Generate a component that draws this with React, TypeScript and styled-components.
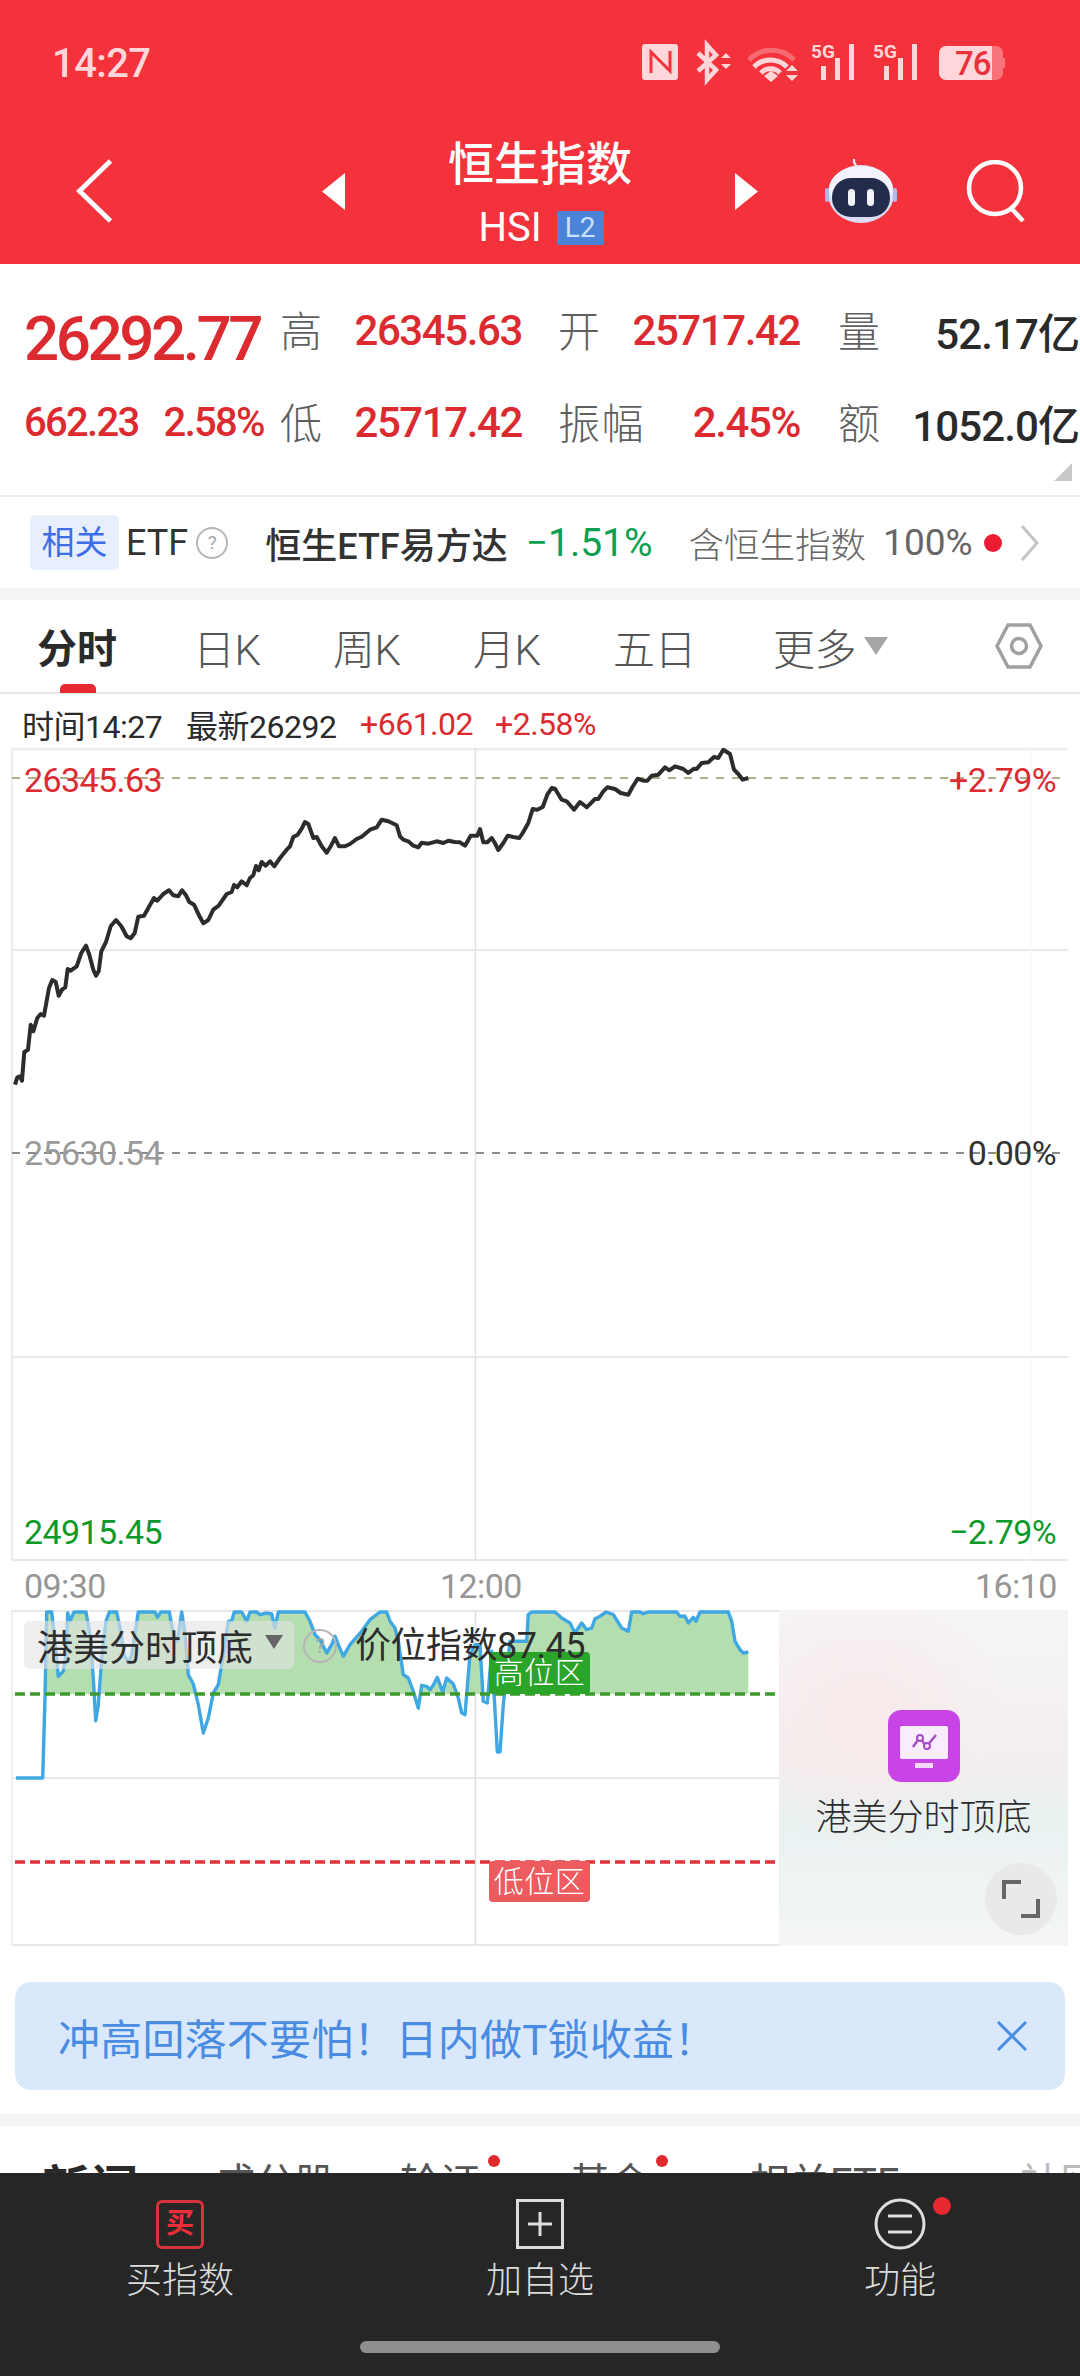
import React from "react";
import styled, { createGlobalStyle } from "styled-components";

const FONT = `Roboto, "Noto Sans CJK SC", sans-serif`;
const RED = "#dc2b30";
const GREEN = "#0b9a2a";

const GlobalStyle = createGlobalStyle`
  html, body { margin: 0; padding: 0; background: #fff; }
  body { font-family: ${FONT}; }
  * { box-sizing: border-box; }
`;

// traced from the reference, 3x zoom coordinates
const PRICE_LEFT = [
  [45, 1040], [52, 1018], [60, 1015], [66, 1028], [73, 942], [84, 935], [92, 860], [100, 880], [112, 840], [122, 828], [132, 833],
  [147, 750], [157, 726], [167, 732], [176, 773], [186, 755], [196, 748], [203, 693], [212, 698], [230, 685], [244, 645], [258, 623],
  [268, 650], [280, 695], [288, 713], [296, 700], [304, 640], [318, 612], [332, 565], [348, 546], [364, 565], [380, 595], [392, 601],
  [404, 585], [415, 536], [432, 533], [445, 510], [462, 480], [472, 488], [490, 468], [507, 457], [520, 472], [535, 475], [546, 457],
  [558, 472], [568, 492], [582, 500], [596, 530], [610, 556], [625, 546], [640, 515], [656, 503], [680, 468], [695, 462], [702, 441],
  [712, 448], [725, 430], [740, 442], [750, 420], [760, 412], [768, 384], [776, 397], [785, 372], [797, 383], [810, 370], [823, 385],
  [840, 360], [860, 335], [870, 325], [880, 297], [893, 290], [905, 272], [915, 252], [925, 258], [940, 300], [950, 297], [965, 325],
  [980, 344], [992, 325], [1005, 300], [1017, 325], [1035, 325], [1050, 318], [1070, 303], [1085, 296], [1110, 275], [1130, 268],
  [1145, 245], [1165, 250], [1190, 262], [1200, 295],
];
const PRICE_RIGHT = [
  [10, 305], [25, 310], [40, 323], [55, 328], [65, 314], [85, 317], [110, 310], [130, 315], [145, 308], [165, 312], [180, 313],
  [195, 323], [212, 293], [232, 293], [240, 273], [250, 313], [262, 313], [275, 300], [283, 312], [295, 336], [310, 315], [323, 293],
  [340, 297], [358, 300], [368, 285], [385, 255], [398, 213], [412, 215], [428, 207], [442, 170], [455, 150], [465, 152], [485, 185],
  [500, 190], [522, 215], [540, 192], [560, 208], [585, 183], [595, 183], [610, 160], [622, 148], [645, 153], [662, 165], [685, 170],
  [697, 148], [713, 122], [730, 128], [742, 128], [755, 113], [775, 110], [795, 88], [808, 97], [825, 85], [850, 93], [865, 105],
  [882, 92], [890, 93], [905, 75], [925, 73], [942, 57], [955, 60], [970, 35], [990, 48], [1002, 95], [1015, 108], [1028, 125], [1045, 120],
];
const INDEX_LEFT = [
  [48, 540], [128, 540], [135, 300], [140, 42], [155, 42], [165, 130], [175, 235], [190, 220], [198, 170], [203, 45], [210, 70], [222, 42],
  [258, 42], [270, 110], [280, 240], [287, 368], [295, 320], [305, 180], [318, 70], [328, 42], [350, 42], [362, 100], [372, 170], [385, 195],
  [395, 170], [415, 42], [465, 42], [472, 58], [483, 42], [508, 42], [520, 110], [532, 130], [545, 42], [555, 110], [565, 230], [580, 258],
  [595, 320], [610, 405], [625, 360], [640, 285], [655, 260], [668, 180], [685, 70], [695, 68], [703, 42], [725, 42], [740, 70], [750, 42],
  [770, 42], [780, 50], [800, 45], [815, 48], [825, 90], [835, 42], [915, 42], [930, 70], [945, 110], [960, 125], [980, 165], [995, 140],
  [1005, 115], [1015, 140], [1030, 175], [1050, 140], [1085, 100], [1110, 65], [1140, 42], [1160, 42], [1170, 70], [1185, 90], [1195, 130],
];
const INDEX_RIGHT = [
  [10, 230], [25, 240], [40, 280], [55, 330], [65, 262], [80, 265], [90, 275], [100, 262], [112, 238], [128, 282], [140, 240], [160, 258],
  [175, 300], [185, 345], [195, 350], [210, 170], [225, 140], [240, 140], [250, 310], [262, 315], [275, 160], [283, 300], [292, 462], [300, 462],
  [310, 320], [330, 130], [380, 130], [385, 50], [395, 42], [465, 42], [485, 60], [510, 75], [525, 105], [545, 75], [560, 95], [575, 90],
  [585, 62], [600, 55], [618, 42], [640, 50], [665, 90], [685, 100], [695, 42], [720, 42], [730, 47], [745, 42], [830, 42], [840, 55],
  [855, 55], [865, 75], [880, 58], [888, 70], [900, 42], [985, 42], [995, 70], [1005, 130], [1020, 155], [1030, 165], [1045, 162],
];

const scale = (pts: number[][], ox: number, oy: number) => pts.map(([x, y]) => [ox + x / 3, oy + y / 3]);
const toLine = (pts: number[][]) => pts.map(([x, y]) => `${x.toFixed(1)},${y.toFixed(1)}`).join(" ");

const pricePoints = toLine([...scale(PRICE_LEFT, 0, 740), ...scale(PRICE_RIGHT, 400, 740)]);
const indexPts = [...scale(INDEX_LEFT, 0, 1600), ...scale(INDEX_RIGHT, 400, 1600)];
const indexPoints = toLine(indexPts);
const indexFill = toLine([...indexPts, [748.3, 1785], [16, 1785]]);

const Page = styled.div`
  width: 1080px;
  height: 2376px;
  overflow: hidden;
  display: flex;
  flex-direction: column;
  background: #fff;
  color: #2a2a2a;
  font-family: ${FONT};
`;

const Header = styled.header`
  height: 264px;
  background: #f3323b;
  color: #fff;
  flex: none;
`;

const StatusBar = styled.div`
  height: 126px;
  padding: 0 62px 0 52px;
  display: flex;
  align-items: center;
  justify-content: space-between;
  color: #ffd6d9;
`;

const Clock = styled.span`
  font-size: 40px;
  font-weight: 500;
  letter-spacing: -0.6px;
`;

const Nav = styled.div`
  height: 138px;
  padding-bottom: 8px;
  display: grid;
  grid-template-columns: 322px 436px 322px;
  align-items: center;
`;

const NavSide = styled.div<{ $right?: boolean }>`
  display: flex;
  align-items: center;
  padding-left: ${(p) => (p.$right ? "67px" : "76px")};
  gap: 68px;
`;

const NavCenter = styled.div`
  display: flex;
  align-items: center;
  justify-content: space-between;
`;

const TitleBlock = styled.div`
  display: flex;
  flex-direction: column;
  align-items: center;
  margin-top: 2px;
`;

const Title = styled.div`
  font-size: 46px;
  font-weight: 500;
  line-height: 62px;
`;

const SubTitle = styled.div`
  display: flex;
  align-items: center;
  gap: 15px;
  font-size: 40px;
  line-height: 46px;
  margin-top: 10px;
  margin-left: 2px;
`;

const LevelBadge = styled.span`
  width: 47px;
  height: 34px;
  background: #4b83d9;
  color: #c9e0fb;
  font-size: 28px;
  line-height: 34px;
  text-align: center;
  border-radius: 2px;
`;

const Quotes = styled.section`
  position: relative;
  height: 233px;
  padding: 20px 0 29px 24px;
  border-bottom: 2px solid #ececec;
  flex: none;
`;

const QuoteRow = styled.div`
  height: 92px;
  display: flex;
  align-items: center;
`;

const QuoteLead = styled.div`
  width: 256px;
  display: flex;
  gap: 25px;
  font-size: 40px;
  font-weight: 500;
  letter-spacing: -1.7px;
  color: ${RED};
`;

const BigPrice = styled.div`
  font-size: 62px;
  font-weight: 500;
  letter-spacing: -3.5px;
  color: ${RED};
  margin-top: 18px;
  line-height: 70px;
`;

const Stat = styled.div<{ $w: number; $gap: number }>`
  width: ${(p) => p.$w}px;
  margin-right: ${(p) => p.$gap}px;
  display: flex;
  justify-content: space-between;
  align-items: center;
`;

const StatLabel = styled.span`
  font-size: 42px;
  font-weight: 300;
  color: #5f5f5f;
  letter-spacing: 1.5px;
  margin-top: -4px;
`;

const StatValue = styled.span<{ $dark?: boolean }>`
  font-size: 42px;
  font-weight: 500;
  letter-spacing: ${(p) => (p.$dark ? "-0.9px" : "-1.4px")};
  color: ${(p) => (p.$dark ? "#2a2a2a" : RED)};
`;

const CornerMark = styled.span`
  position: absolute;
  right: 8px;
  bottom: 14px;
  width: 0;
  height: 0;
  border-style: solid;
  border-width: 0 0 18px 18px;
  border-color: transparent transparent #c9c9c9 transparent;
`;

const EtfRow = styled.section`
  height: 91px;
  display: flex;
  align-items: center;
  padding-left: 30px;
  flex: none;
  font-size: 36px;
`;

const RelatedTag = styled.span`
  width: 89px;
  height: 55px;
  line-height: 55px;
  text-align: center;
  background: #e7effd;
  color: #3d6ee6;
  border-radius: 5px;
  font-size: 33px;
  margin-right: 7px;
`;

const EtfText = styled.span<{ $ml?: number; $color?: string; $weight?: number; $size?: number }>`
  margin-left: ${(p) => p.$ml ?? 0}px;
  color: ${(p) => p.$color ?? "#333"};
  font-weight: ${(p) => p.$weight ?? 400};
  font-size: ${(p) => p.$size ?? 36}px;
  white-space: nowrap;
`;

const HelpCircle = styled.span<{ $size: number; $ml: number }>`
  display: block;
  width: ${(p) => p.$size}px;
  height: ${(p) => p.$size}px;
  margin-left: ${(p) => p.$ml}px;
  border: 2px solid #b5b5b5;
  border-radius: 50%;
  color: #a5a5a5;
  font-size: ${(p) => p.$size * 0.6}px;
  line-height: ${(p) => p.$size - 4}px;
  text-align: center;
  flex: none;
`;

const RedDot = styled.span`
  width: 18px;
  height: 18px;
  margin-left: 11px;
  border-radius: 50%;
  background: #ee1c33;
  flex: none;
`;

const RowChevron = styled.svg`
  margin-left: 18px;
  flex: none;
`;

const GapBand = styled.div<{ $h: number }>`
  height: ${(p) => p.$h}px;
  background: #f4f4f4;
  flex: none;
`;

const Tabs = styled.nav`
  position: relative;
  height: 94px;
  padding-left: 37px;
  border-bottom: 2px solid #e6e6e6;
  display: flex;
  align-items: center;
  flex: none;
`;

const Tab = styled.div<{ $w: number; $active?: boolean }>`
  position: relative;
  width: ${(p) => p.$w}px;
  flex: none;
  display: flex;
  align-items: center;
  font-size: ${(p) => (p.$active ? 40 : 42)}px;
  letter-spacing: ${(p) => (p.$active ? "0" : "-0.5px")};
  font-weight: ${(p) => (p.$active ? 700 : 300)};
  color: ${(p) => (p.$active ? "#2a2a2a" : "#555")};
`;

const TabMark = styled.span`
  position: absolute;
  left: 23px;
  bottom: -18px;
  width: 36px;
  height: 9px;
  background: #e8292f;
  border-radius: 5px 5px 0 0;
`;

const MoreCaret = styled.span`
  width: 0;
  height: 0;
  margin-left: 8px;
  border-style: solid;
  border-width: 18px 12px 0 12px;
  border-color: #a6a6a6 transparent transparent transparent;
`;

const InfoLine = styled.div`
  height: 54px;
  padding: 6px 0 0 22px;
  display: flex;
  align-items: center;
  font-size: 32px;
  flex: none;
`;

const InfoText = styled.span<{ $w: number; $red?: boolean }>`
  width: ${(p) => p.$w}px;
  flex: none;
  white-space: nowrap;
  letter-spacing: -0.5px;
  color: ${(p) => (p.$red ? RED : "#2a2a2a")};
`;

const ChartBox = styled.div`
  position: relative;
  height: 814px;
  flex: none;
`;

const ChartSvg = styled.svg`
  display: block;
`;

const AxisLabel = styled.span<{ $top: number; $left?: number; $right?: number; $color: string }>`
  position: absolute;
  top: ${(p) => p.$top}px;
  ${(p) => (p.$left !== undefined ? `left: ${p.$left}px;` : "")}
  ${(p) => (p.$right !== undefined ? `right: ${p.$right}px;` : "")}
  color: ${(p) => p.$color};
  font-size: 34px;
  line-height: 40px;
  letter-spacing: -0.6px;
`;

const TimeAxis = styled.div`
  height: 48px;
  padding-left: 24px;
  display: grid;
  grid-template-columns: 416px 535px auto;
  align-items: center;
  color: #969696;
  font-size: 34px;
  letter-spacing: -0.6px;
  flex: none;
`;

const SubChart = styled.div`
  position: relative;
  height: 342px;
  display: flex;
  align-items: flex-start;
  flex: none;
`;

const IndicatorChip = styled.div`
  position: absolute;
  left: 24px;
  top: 11px;
  width: 270px;
  height: 48px;
  padding-left: 13px;
  display: flex;
  align-items: center;
  background: rgba(228, 228, 228, 0.62);
  border-radius: 6px;
  font-size: 36px;
  color: #2d2d2d;
`;

const ChipCaret = styled.span`
  width: 0;
  height: 0;
  margin-left: 12px;
  margin-top: -6px;
  border-style: solid;
  border-width: 14px 9px 0 9px;
  border-color: #666 transparent transparent transparent;
`;

const OverlayHelp = styled.div`
  position: absolute;
  left: 303px;
  top: 19px;
`;

const IndicatorValue = styled.div`
  position: absolute;
  left: 355px;
  top: 12px;
  font-size: 36px;
  line-height: 48px;
  color: #2d2d2d;
  letter-spacing: -0.5px;
  z-index: 2;
`;

const ZoneTag = styled.div<{ $top: number; $bg: string; $height: number }>`
  position: absolute;
  left: 489px;
  top: ${(p) => p.$top}px;
  width: 101px;
  height: ${(p) => p.$height}px;
  background: ${(p) => p.$bg};
  color: #fff;
  font-size: 30px;
  font-weight: 300;
  line-height: ${(p) => p.$height}px;
  text-align: center;
  letter-spacing: 0.5px;
  border-radius: 4px;
`;

const PromoPanel = styled.div`
  position: relative;
  width: 289px;
  height: 336px;
  flex: none;
  display: flex;
  flex-direction: column;
  align-items: center;
  padding-top: 100px;
  background:
    radial-gradient(circle at 30% 30%, rgba(250, 228, 230, 0.6), transparent 45%),
    linear-gradient(180deg, #f6f5f6 0%, #f3eeee 46%, #e9f1f1 62%, #f4f5f6 100%);
  font-size: 36px;
  font-weight: 300;
  color: #2d2d2d;
`;

const PromoTitle = styled.div`
  margin-top: 12px;
  line-height: 48px;
`;

const ExpandButton = styled.div`
  position: absolute;
  right: 11px;
  bottom: 11px;
  width: 72px;
  height: 72px;
  border-radius: 50%;
  background: #e9e9e9;
  display: flex;
  align-items: center;
  justify-content: center;
`;

const Banner = styled.div`
  height: 108px;
  margin: 30px 15px 24px;
  padding: 0 38px 0 43px;
  background: #d9e8fb;
  border-radius: 16px;
  display: flex;
  align-items: center;
  justify-content: space-between;
  color: #4a8ce2;
  font-size: 42px;
  letter-spacing: 0.2px;
  flex: none;
`;

const NewsTabs = styled.div`
  height: 47px;
  overflow: hidden;
  position: relative;
  padding: 26px 0 0 42px;
  display: flex;
  flex: none;
`;

const NewsTab = styled.div<{ $w: number; $active?: boolean; $faded?: boolean }>`
  position: relative;
  width: ${(p) => p.$w}px;
  flex: none;
  white-space: nowrap;
  font-size: ${(p) => (p.$active ? 48 : 40)}px;
  font-weight: ${(p) => (p.$active ? 700 : 400)};
  color: ${(p) => (p.$active ? "#2a2a2a" : p.$faded ? "#bbb" : "#555")};
  line-height: 56px;
  height: 56px;
  margin-top: ${(p) => (p.$active ? 9 : 4)}px;
`;

const NewsDot = styled.span<{ $left: number }>`
  position: absolute;
  left: ${(p) => p.$left}px;
  top: -1px;
  width: 12px;
  height: 12px;
  border-radius: 50%;
  background: #e22a2e;
`;

const BottomBar = styled.footer`
  flex: 1;
  background: #262626;
  display: flex;
  flex-direction: column;
  padding-top: 26px;
`;

const Actions = styled.div`
  display: grid;
  grid-template-columns: repeat(3, 360px);
`;

const Action = styled.div`
  position: relative;
  display: flex;
  flex-direction: column;
  align-items: center;
  color: #dcdcdc;
  font-size: 36px;
  font-weight: 300;
`;

const ActionIcon = styled.div`
  height: 50px;
  display: flex;
  align-items: center;
  justify-content: center;
`;

const ActionLabel = styled.div`
  margin-top: 9px;
  line-height: 46px;
`;

const BuyIcon = styled.div`
  width: 48px;
  height: 49px;
  border: 3px solid #d9333a;
  border-radius: 6px;
  color: #ee2f3a;
  font-size: 28px;
  font-weight: 700;
  line-height: 42px;
  text-align: center;
`;

const ActionDot = styled.span`
  position: absolute;
  left: 213px;
  top: -2px;
  width: 18px;
  height: 18px;
  border-radius: 50%;
  background: #e8292f;
`;

const HomeBar = styled.div`
  width: 360px;
  height: 12px;
  margin: 37px auto 0;
  background: #8f8f8f;
  border-radius: 6px;
`;

const NavTriangle = styled.svg`
  margin-top: 1px;
  flex: none;
`;

const StatusIcons = () => (
  <svg width="398" height="70" viewBox="620 30 398 70" fill="#ffd6d9">
    <path fillRule="evenodd" d="M645 46h30a3 3 0 0 1 3 3v30a3 3 0 0 1-3 3h-30a3 3 0 0 1-3-3V49a3 3 0 0 1 3-3z" />
    <path d="M651 75V54l19 19V53" fill="none" stroke="#f3323b" strokeWidth="3" />
    <path d="M698 55l18 17-9 10V47l9 10-18 16" fill="none" stroke="#ffd6d9" strokeWidth="4.5" />
    <path d="M721 60l5-5 5 5zM721 66l5 5 5-5z" />
    <g fill="none" stroke="#ffd6d9" strokeWidth="5">
      <path d="M749 62a31 31 0 0 1 45 0" opacity="0.35" />
      <path d="M754 69a23 23 0 0 1 33 0" />
      <path d="M761 75a13 13 0 0 1 19 0" />
    </g>
    <path d="M764 78l7-5 7 5-7 6zM786 73l6-6 6 6zM786 77l6 6 6-6z" />
    <text x="811" y="60" fontSize="19" fontWeight="700" fontFamily="Roboto">5G</text>
    <path d="M821 68h5v14h-5zM835 60h5v22h-5zM849 46h5v36h-5z" />
    <text x="873" y="60" fontSize="19" fontWeight="700" fontFamily="Roboto">5G</text>
    <path d="M884 68h5v14h-5zM898 60h5v22h-5zM912 46h5v36h-5z" />
    <path d="M946 48h46v34h-46a7 7 0 0 1-7-7V55a7 7 0 0 1 7-7z" />
    <path d="M992 48h4a7 7 0 0 1 7 7v20a7 7 0 0 1-7 7h-4z" opacity="0.4" />
    <path d="M1003 60h2v10h-2z" opacity="0.4" />
    <text x="955" y="77" fontSize="33" fontWeight="500" fontFamily="Roboto" fill="#e8323c" letterSpacing="-1">76</text>
  </svg>
);

const RobotIcon = () => (
  <svg width="72" height="66" viewBox="0 0 72 66">
    <path d="M32 10c-1-4-4-5-3-8" fill="none" stroke="#e8e4f6" strokeWidth="2.5" strokeLinecap="round" />
    <ellipse cx="36" cy="36" rx="33" ry="29" fill="#dcdcf6" />
    <ellipse cx="36" cy="31" rx="32" ry="23" fill="#f3f2fd" />
    <rect x="7" y="20" width="58" height="39" rx="19" fill="#232d4b" />
    <rect x="23" y="31" width="7" height="17" rx="3.5" fill="#f4f4fb" />
    <rect x="42" y="31" width="7" height="17" rx="3.5" fill="#f4f4fb" />
    <rect x="0" y="30" width="4" height="14" rx="2" fill="#b5b7ea" />
    <rect x="68" y="30" width="4" height="14" rx="2" fill="#b5b7ea" />
  </svg>
);

const Triangle = ({ flip }: { flip?: boolean }) => (
  <NavTriangle width="23" height="37" viewBox="0 0 23 37">
    <path d={flip ? "M0 0l23 18.5L0 37z" : "M23 0L0 18.5 23 37z"} fill="#fff" />
  </NavTriangle>
);

const PromoIcon = () => (
  <svg width="72" height="72" viewBox="0 0 72 72">
    <rect width="72" height="72" rx="13" fill="#c944e6" />
    <rect x="12" y="16" width="48" height="33" rx="2" fill="#f8ecfd" />
    <rect x="27" y="53" width="18" height="5" fill="#f3d8fb" />
    <path d="M25 37l7-10 6 10 10-12" fill="none" stroke="#a24cc6" strokeWidth="2.4" />
    <circle cx="32" cy="28" r="3" fill="#f8ecfd" stroke="#a24cc6" strokeWidth="2" />
    <circle cx="39" cy="36" r="3" fill="#f8ecfd" stroke="#a24cc6" strokeWidth="2" />
  </svg>
);

const tabs = [
  { label: "分时", w: 156, active: true },
  { label: "日K", w: 140 },
  { label: "周K", w: 140 },
  { label: "月K", w: 140 },
  { label: "五日", w: 160 },
  { label: "更多", w: 222, caret: true },
];

export default function App() {
  return (
    <Page>
      <GlobalStyle />
      <Header>
        <StatusBar>
          <Clock>14:27</Clock>
          <StatusIcons />
        </StatusBar>
        <Nav>
          <NavSide>
            <svg width="38" height="64" viewBox="0 0 38 66">
              <path d="M35 2L3 33l32 31" fill="none" stroke="#fff" strokeWidth="5" />
            </svg>
          </NavSide>
          <NavCenter>
            <Triangle />
            <TitleBlock>
              <Title>恒生指数</Title>
              <SubTitle>
                HSI<LevelBadge>L2</LevelBadge>
              </SubTitle>
            </TitleBlock>
            <Triangle flip />
          </NavCenter>
          <NavSide $right>
            <RobotIcon />
            <svg width="62" height="62" viewBox="0 0 62 62">
              <circle cx="30" cy="28" r="26" fill="none" stroke="#fff" strokeWidth="4.5" />
              <path d="M46 48l12 13" stroke="#fff" strokeWidth="4.5" />
            </svg>
          </NavSide>
        </Nav>
      </Header>

      <Quotes>
        <QuoteRow>
          <QuoteLead>
            <BigPrice>26292.77</BigPrice>
          </QuoteLead>
          <Stat $w={242} $gap={36}>
            <StatLabel>高</StatLabel>
            <StatValue>26345.63</StatValue>
          </Stat>
          <Stat $w={242} $gap={38}>
            <StatLabel>开</StatLabel>
            <StatValue>25717.42</StatValue>
          </Stat>
          <Stat $w={241} $gap={0}>
            <StatLabel>量</StatLabel>
            <StatValue $dark>52.17亿</StatValue>
          </Stat>
        </QuoteRow>
        <QuoteRow>
          <QuoteLead>
            <span>662.23</span>
            <span>2.58%</span>
          </QuoteLead>
          <Stat $w={242} $gap={36}>
            <StatLabel>低</StatLabel>
            <StatValue>25717.42</StatValue>
          </Stat>
          <Stat $w={242} $gap={38}>
            <StatLabel>振幅</StatLabel>
            <StatValue>2.45%</StatValue>
          </Stat>
          <Stat $w={241} $gap={0}>
            <StatLabel>额</StatLabel>
            <StatValue $dark>1052.0亿</StatValue>
          </Stat>
        </QuoteRow>
        <CornerMark />
      </Quotes>

      <EtfRow>
        <RelatedTag>相关</RelatedTag>
        <EtfText>ETF</EtfText>
        <HelpCircle $size={32} $ml={8}>?</HelpCircle>
        <EtfText $ml={37} $weight={500}>恒生ETF易方达</EtfText>
        <EtfText $ml={18} $color="#0d9f50" $size={39}>−1.51%</EtfText>
        <EtfText $ml={36} $color="#666" $weight={300} $size={35.5}>含恒生指数</EtfText>
        <EtfText $ml={17} $color="#666" $size={37}>100%</EtfText>
        <RedDot />
        <RowChevron width="20" height="36" viewBox="0 0 20 36">
          <path d="M2 1l15 17L2 35" fill="none" stroke="#c4c4c4" strokeWidth="3" />
        </RowChevron>
      </EtfRow>
      <GapBand $h={12} />

      <Tabs>
        {tabs.map((t) => (
          <Tab key={t.label} $w={t.w} $active={t.active}>
            {t.label}
            {t.caret && <MoreCaret />}
            {t.active && <TabMark />}
          </Tab>
        ))}
        <svg width="48" height="46" viewBox="0 0 48 46">
          <path d="M13 2h22l11 21-11 21H13L2 23z" fill="none" stroke="#a0a0a0" strokeWidth="3.5" />
          <circle cx="24" cy="23" r="7.5" fill="none" stroke="#a0a0a0" strokeWidth="3.5" />
        </svg>
      </Tabs>

      <InfoLine>
        <InfoText $w={164}>时间14:27</InfoText>
        <InfoText $w={174}>最新26292</InfoText>
        <InfoText $w={135} $red>+661.02</InfoText>
        <InfoText $w={120} $red>+2.58%</InfoText>
      </InfoLine>

      <ChartBox>
        <ChartSvg width="1080" height="814" viewBox="0 750 1080 814">
          <g stroke="#e9e9e9" strokeWidth="2" fill="none">
            <path d="M12 751H1068" stroke="#eeeeee" strokeWidth="3" />
            <path d="M12 750V1563" stroke="#eeeeee" strokeWidth="2.5" />
            <path d="M12 952H1068M12 1359H1068M12 1562H1068" />
            <path d="M475.5 750V1563" strokeWidth="1.5" stroke="#e2e2e2" />
            <path d="M1031 750V1563" strokeWidth="1" stroke="#f8f8f8" />
          </g>
          <path d="M12 780H1062" stroke="#b5ab85" strokeWidth="2" strokeDasharray="8 8" />
          <path d="M12 1155H1062" stroke="#8a8a8a" strokeWidth="2" strokeDasharray="8 8" />
          <polyline points={pricePoints} fill="none" stroke="#2c2c2c" strokeWidth="4" strokeLinejoin="round" />
        </ChartSvg>
        <AxisLabel $top={12} $left={24} $color="#dc2b30">26345.63</AxisLabel>
        <AxisLabel $top={12} $right={24} $color="#dc2b30">+2.79%</AxisLabel>
        <AxisLabel $top={385} $left={24} $color="#9a9a9a">25630.54</AxisLabel>
        <AxisLabel $top={385} $right={24} $color="#333">0.00%</AxisLabel>
        <AxisLabel $top={764} $left={24} $color={GREEN}>24915.45</AxisLabel>
        <AxisLabel $top={764} $right={24} $color={GREEN}>−2.79%</AxisLabel>
      </ChartBox>

      <TimeAxis>
        <span>09:30</span>
        <span>12:00</span>
        <span>16:10</span>
      </TimeAxis>

      <SubChart>
        <ChartSvg width="779" height="342" viewBox="0 1612 779 342">
          <defs>
            <clipPath id="aboveHigh">
              <rect x="0" y="1600" width="779" height="96" />
            </clipPath>
          </defs>
          <g stroke="#e8e8e8" strokeWidth="2" fill="none">
            <path d="M12 1613H779M12 1780H779M12 1947H779" />
            <path d="M12 1612V1947" stroke="#f0f0f0" />
            <path d="M475.5 1612V1947" stroke="#dddddd" strokeWidth="1.5" />
          </g>
          <polygon points={indexFill} fill="#b4deb0" clipPath="url(#aboveHigh)" />
          <polyline points={indexPoints} fill="none" stroke="#3fa8e2" strokeWidth="3.4" strokeLinejoin="round" />
          <path d="M15 1696H776" stroke="#3c9a2c" strokeWidth="3.5" strokeDasharray="10 5" />
          <path d="M15 1864H776" stroke="#e0323a" strokeWidth="3.5" strokeDasharray="10 5" />
        </ChartSvg>
        <IndicatorChip>
          港美分时顶底
          <ChipCaret />
        </IndicatorChip>
        <OverlayHelp>
          <HelpCircle $size={34} $ml={0}>?</HelpCircle>
        </OverlayHelp>
        <ZoneTag $top={42} $bg="#2aa52a" $height={42}>高位区</ZoneTag>
        <ZoneTag $top={251} $bg="#ec5b5e" $height={41}>低位区</ZoneTag>
        <IndicatorValue>价位指数87.45</IndicatorValue>
        <PromoPanel>
          <PromoIcon />
          <PromoTitle>港美分时顶底</PromoTitle>
          <ExpandButton>
            <svg width="38" height="38" viewBox="0 0 38 38">
              <path d="M2 19V2h17M36 19v17H19" fill="none" stroke="#666" strokeWidth="4" />
            </svg>
          </ExpandButton>
        </PromoPanel>
      </SubChart>

      <Banner>
        <span>冲高回落不要怕！日内做T锁收益！</span>
        <svg width="30" height="30" viewBox="0 0 30 30">
          <path d="M1 1l28 28M29 1L1 29" stroke="#4a8ce2" strokeWidth="3" />
        </svg>
      </Banner>
      <GapBand $h={12} />

      <NewsTabs>
        <NewsTab $w={173} $active>新闻</NewsTab>
        <NewsTab $w={185}>成分股</NewsTab>
        <NewsTab $w={170}>轮证<NewsDot $left={88} /></NewsTab>
        <NewsTab $w={180}>基金<NewsDot $left={86} /></NewsTab>
        <NewsTab $w={270}>相关ETF</NewsTab>
        <NewsTab $w={60} $faded>社区</NewsTab>
      </NewsTabs>

      <BottomBar>
        <Actions>
          <Action>
            <ActionIcon><BuyIcon>买</BuyIcon></ActionIcon>
            <ActionLabel>买指数</ActionLabel>
          </Action>
          <Action>
            <ActionIcon>
              <svg width="48" height="50" viewBox="0 0 48 50">
                <rect x="1.5" y="1.5" width="45" height="47" fill="none" stroke="#dcdcdc" strokeWidth="3" />
                <path d="M24 13v24M12 25h24" stroke="#dcdcdc" strokeWidth="3" />
              </svg>
            </ActionIcon>
            <ActionLabel>加自选</ActionLabel>
          </Action>
          <Action>
            <ActionIcon>
              <svg width="52" height="52" viewBox="0 0 52 52">
                <circle cx="26" cy="26" r="24" fill="none" stroke="#dcdcdc" strokeWidth="3" />
                <path d="M14 18h24M14 34h24" stroke="#dcdcdc" strokeWidth="3" />
              </svg>
            </ActionIcon>
            <ActionLabel>功能</ActionLabel>
            <ActionDot />
          </Action>
        </Actions>
        <HomeBar />
      </BottomBar>
    </Page>
  );
}
